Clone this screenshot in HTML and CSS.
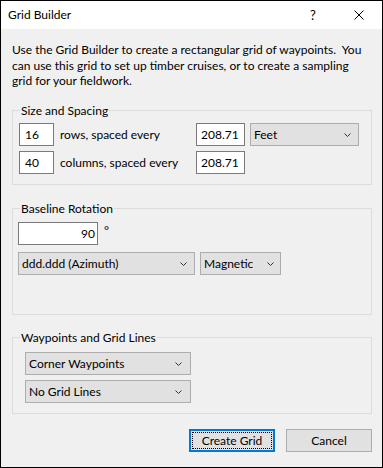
FILE: index.html
```html
<!DOCTYPE html>
<html>
<head>
<meta charset="utf-8">
<title>Grid Builder</title>
<link rel="stylesheet" href="styles.css">
</head>
<body>
<div class="window">
  <div class="titlebar">
    <span class="title">Grid Builder</span>
    <span class="cap help">?</span>
    <span class="cap close"><svg width="10" height="10" viewBox="0 0 10 10"><path d="M0.5 0.5 L9.5 9.5 M9.5 0.5 L0.5 9.5" stroke="#000" stroke-width="1" fill="none"/></svg></span>
  </div>
  <div class="content">
    <p class="intro">Use the Grid Builder to create a rectangular grid of waypoints.&nbsp; You can use this grid to set up timber cruises, or to create a sampling grid for your fieldwork.</p>

    <section class="group g-size">
      <div class="legend">Size and Spacing</div>
      <div class="row first">
        <div class="box num">16</div>
        <div class="lbl">rows, spaced every</div>
        <div class="box val">208.71</div>
        <div class="select unit"><span>Feet</span><svg class="chev" width="7" height="4" viewBox="0 0 7 4"><path d="M0.5 0.5 L3.5 3.5 L6.5 0.5" stroke="#333" fill="none"/></svg></div>
      </div>
      <div class="row">
        <div class="box num">40</div>
        <div class="lbl">columns, spaced every</div>
        <div class="box val">208.71</div>
      </div>
    </section>

    <section class="group g-rot">
      <div class="legend">Baseline Rotation</div>
      <div class="row angle">
        <div class="box deg">90</div>
        <span class="degsign">°</span>
      </div>
      <div class="row selects">
        <div class="select fmt"><span>ddd.ddd (Azimuth)</span><svg class="chev" width="7" height="4" viewBox="0 0 7 4"><path d="M0.5 0.5 L3.5 3.5 L6.5 0.5" stroke="#333" fill="none"/></svg></div>
        <div class="select ref"><span>Magnetic</span><svg class="chev" width="7" height="4" viewBox="0 0 7 4"><path d="M0.5 0.5 L3.5 3.5 L6.5 0.5" stroke="#333" fill="none"/></svg></div>
      </div>
    </section>

    <section class="group g-way">
      <div class="legend">Waypoints and Grid Lines</div>
      <div class="select wide first"><span>Corner Waypoints</span><svg class="chev" width="7" height="4" viewBox="0 0 7 4"><path d="M0.5 0.5 L3.5 3.5 L6.5 0.5" stroke="#333" fill="none"/></svg></div>
      <div class="select wide second"><span>No Grid Lines</span><svg class="chev" width="7" height="4" viewBox="0 0 7 4"><path d="M0.5 0.5 L3.5 3.5 L6.5 0.5" stroke="#333" fill="none"/></svg></div>
    </section>

    <div class="buttons">
      <button class="btn default">Create Grid</button>
      <button class="btn">Cancel</button>
    </div>
  </div>
</div>
</body>
</html>
```

FILE: styles.css
```css
* { box-sizing: border-box; }
html, body { margin: 0; padding: 0; }
body {
  font-family: Lato, "Liberation Sans", sans-serif;
  font-size: 12px;
  color: #000;
  background: #f0f0f0;
}
.window {
  width: 383px;
  height: 468px;
  border: 1px solid #000;
  background: #f0f0f0;
  display: flex;
  flex-direction: column;
}
.titlebar {
  height: 28px;
  background: #fff;
  display: flex;
  align-items: center;
  flex: none;
}
.title {
  flex: 1;
  padding-left: 7px;
  line-height: 28px;
}
.cap {
  width: 46px;
  height: 28px;
  display: flex;
  align-items: center;
  justify-content: center;
}
.help { font-size: 13px; }
.content {
  flex: 1;
  padding: 0 10px 0 11px;
}
.intro {
  margin: 13px 0 0 0;
  padding-right: 6px;
  height: 47px;
  line-height: 15.5px;
}
.group {
  border: 1px solid #dcdcdc;
}
.legend {
  margin: -8px 0 0 7px;
  padding: 0 1px;
  width: fit-content;
  line-height: 15px;
  background: #f0f0f0;
}
.row {
  display: flex;
  align-items: center;
}
.box {
  height: 23px;
  border: 1px solid #7a7a7a;
  background: #fff;
  line-height: 21px;
}
.select {
  height: 23px;
  border: 1px solid #adadad;
  background: #e1e1e1;
  display: flex;
  align-items: center;
  justify-content: space-between;
  padding: 0 7px 0 3px;
}
.chev { flex: none; }

/* group 1 */
.g-size {
  margin-top: 21px;
  padding-bottom: 10px;
}
.g-size .row { margin-left: 6px; }
.g-size .row.first { margin-top: 5px; }
.g-size .row + .row { margin-top: 5px; }
.num { width: 35px; padding-left: 5px; }
.lbl { width: 142px; padding-left: 6px; }
.val { width: 49px; padding-left: 4px; }
.unit { width: 109px; margin-left: 5px; }

/* group 2 */
.g-rot {
  margin-top: 23px;
  padding-bottom: 39px;
}
.g-rot .row { margin-left: 5px; }
.angle { margin-top: 6px; }
.deg { width: 80px; text-align: right; padding-right: 2px; }
.degsign { margin-left: 6px; align-self: flex-start; line-height: 18px; }
.selects { margin-top: 7px; }
.fmt { width: 177px; padding-right: 7px; }
.ref { width: 81px; margin-left: 5px; padding-right: 6px; }

/* group 3 */
.g-way {
  margin-top: 22px;
  padding-bottom: 10px;
}
.wide { width: 166px; margin-left: 12px; padding-right: 8px; }
.wide.first { margin-top: 7px; }
.wide.second { margin-top: 5px; }

.buttons {
  margin-top: 15px;
  display: flex;
  justify-content: flex-end;
  gap: 11px;
}
.btn {
  width: 86px;
  height: 23px;
  border: 1px solid #adadad;
  background: #e1e1e1;
  font-family: inherit;
  font-size: 12px;
  color: #000;
  padding: 0;
}
.btn.default {
  border: 2px solid #0078d7;
  outline: 1px dotted #000;
  outline-offset: -4px;
}
```
